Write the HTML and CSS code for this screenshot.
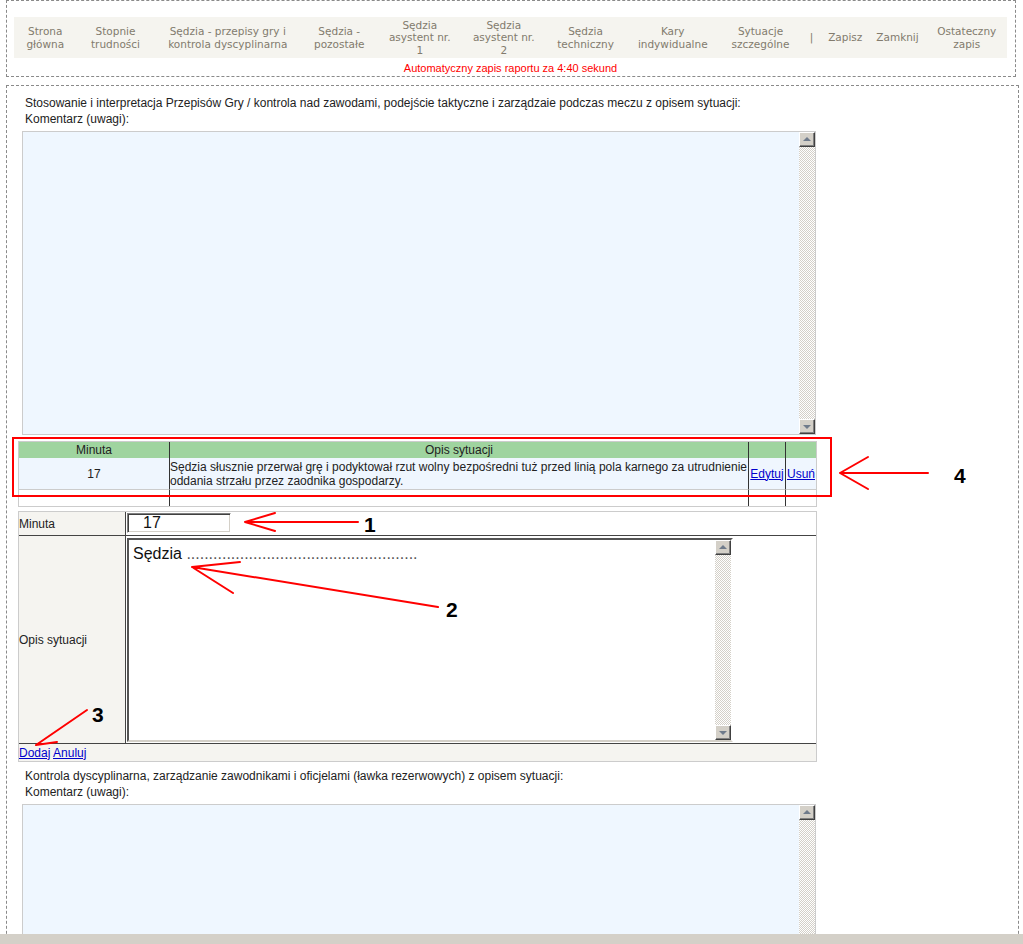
FILE: index.html
```html
<!DOCTYPE html>
<html lang="pl">
<head>
<meta charset="utf-8">
<title>Raport sędziego</title>
<link rel="stylesheet" href="styles.css">
</head>
<body>
<div class="topbox">
  <nav class="nav">
    <a class="nav-item" href="#">Strona<br>główna</a>
    <a class="nav-item" href="#">Stopnie<br>trudności</a>
    <a class="nav-item" href="#">Sędzia - przepisy gry i<br>kontrola dyscyplinarna</a>
    <a class="nav-item" href="#">Sędzia -<br>pozostałe</a>
    <a class="nav-item" href="#">Sędzia<br>asystent nr.<br>1</a>
    <a class="nav-item" href="#">Sędzia<br>asystent nr.<br>2</a>
    <a class="nav-item" href="#">Sędzia<br>techniczny</a>
    <a class="nav-item" href="#">Kary<br>indywidualne</a>
    <a class="nav-item" href="#">Sytuacje<br>szczególne</a>
    <span class="nav-item">|</span>
    <a class="nav-item" href="#">Zapisz</a>
    <a class="nav-item" href="#">Zamknij</a>
    <a class="nav-item" href="#">Ostateczny<br>zapis</a>
  </nav>
  <div class="autosave">Automatyczny zapis raportu za 4:40 sekund</div>
</div>

<div class="mainbox">
  <div class="caption">Stosowanie i interpretacja Przepisów Gry / kontrola nad zawodami, podejście taktyczne i zarządzaie podczas meczu z opisem sytuacji:</div>
  <div class="caption">Komentarz (uwagi):</div>
  <div class="memo">
    <div class="memo-body"></div>
    <div class="sb">
      <div class="sb-btn sb-up"></div>
      <div class="sb-track"></div>
      <div class="sb-btn sb-down"></div>
    </div>
  </div>

  <table class="list">
    <thead>
      <tr>
        <th class="col-min">Minuta</th>
        <th class="col-desc sep">Opis sytuacji</th>
        <th class="col-edit sep"></th>
        <th class="col-del sep"></th>
      </tr>
    </thead>
    <tbody>
      <tr class="row-data">
        <td class="num">17</td>
        <td class="sep desc"><span class="nowrap">Sędzia słusznie przerwał grę i podyktował rzut wolny bezpośredni tuż przed linią pola karnego za utrudnienie</span><br>oddania strzału przez zaodnika gospodarzy.</td>
        <td class="sep act"><a href="#">Edytuj</a></td>
        <td class="sep act"><a href="#">Usuń</a></td>
      </tr>
      <tr class="row-empty">
        <td></td>
        <td class="sep"></td>
        <td class="sep"></td>
        <td class="sep"></td>
      </tr>
    </tbody>
  </table>

  <table class="form">
    <tr class="frow-min">
      <th class="lbl">Minuta</th>
      <td class="fval"><div class="field">17</div></td>
    </tr>
    <tr class="frow-desc">
      <th class="lbl">Opis sytuacji</th>
      <td class="fval">
        <div class="ftext">
          <div class="ftext-body">Sędzia <span class="dots">....................................................</span></div>
          <div class="sb">
            <div class="sb-btn sb-up"></div>
            <div class="sb-track"></div>
            <div class="sb-btn sb-down"></div>
          </div>
        </div>
      </td>
    </tr>
    <tr class="frow-actions">
      <td colspan="2" class="actions"><a href="#">Dodaj</a> <a href="#">Anuluj</a></td>
    </tr>
  </table>

  <div class="caption spaced">Kontrola dyscyplinarna, zarządzanie zawodnikami i oficjelami (ławka rezerwowych) z opisem sytuacji:</div>
  <div class="caption">Komentarz (uwagi):</div>
  <div class="memo">
    <div class="memo-body"></div>
    <div class="sb">
      <div class="sb-btn sb-up"></div>
      <div class="sb-track"></div>
      <div class="sb-btn sb-down"></div>
    </div>
  </div>
</div>

<svg class="overlay" width="1023" height="944" viewBox="0 0 1023 944" xmlns="http://www.w3.org/2000/svg">
  <g fill="none" stroke="#ff0000" stroke-width="2" stroke-linecap="round">
    <rect x="13" y="438" width="818" height="58"/>
    <path d="M840 473 L928 473 M840 473 L868 457 M840 473 L868 489"/>
    <path d="M245 522 L358 522 M245 522 L275 513 M245 522 L275 531"/>
    <path d="M192 567 L438 607 M192 567 L240 562 M192 567 L233 593"/>
    <path d="M87 710 L36 745 M36 745 L57 742"/>
  </g>
  <g class="marks">
    <text x="954" y="483">4</text>
    <text x="364" y="532">1</text>
    <text x="446" y="617">2</text>
    <text x="92" y="722">3</text>
  </g>
</svg>
<div class="statusbar"></div>
</body>
</html>
```

FILE: styles.css
```css
html {
  overflow: hidden;
}

body {
  margin: 0;
  position: relative;
  background: #fff;
  font-family: "Liberation Sans", Arial, sans-serif;
  font-size: 12px;
  color: #222;
}

a {
  color: #0000cc;
}

/* ---------- top navigation box ---------- */
.topbox {
  margin-left: 6px;
  width: 1010px;
  box-sizing: border-box;
  border: 1px dashed #8a8a8a;
  padding: 16px 8px 0 7px;
}

.nav {
  display: grid;
  grid-template-columns: 62.5px 78px 146.5px 76.5px 84.5px 83.5px 80px 94.5px 81px 21px 46.5px 58px 80.5px;
  align-items: center;
  height: 41px;
  background: #f5f4ef;
}

.nav-item {
  text-align: center;
  white-space: nowrap;
  font-family: "DejaVu Sans", Verdana, sans-serif;
  font-size: 10.5px;
  line-height: 12.5px;
  color: #827b6d;
  text-decoration: none;
}

.autosave {
  margin-top: 3px;
  padding-bottom: 1px;
  text-align: center;
  font-size: 11px;
  line-height: 14px;
  color: #ff0000;
}

/* ---------- main content box ---------- */
.mainbox {
  margin: 8px 0 0 6px;
  width: 1013px;
  box-sizing: border-box;
  border: 1px dashed #8a8a8a;
  padding: 9px 0 0 11px;
}

.caption {
  margin-left: 7px;
  line-height: 16px;
  color: #222;
}

.caption.spaced {
  margin-top: 6px;
}

/* fake classic textarea */
.memo {
  display: flex;
  margin: 4px 0 0 4px;
  width: 794px;
  height: 304px;
  box-sizing: border-box;
  border: 1px solid #cccccc;
  background: #eff7ff;
}

.memo-body {
  flex: 1;
}

.sb {
  display: flex;
  flex-direction: column;
  width: 16px;
  flex: none;
  background: repeating-conic-gradient(#d4d0c8 0 25%, #ffffff 0 50%) 0 0 / 2px 2px;
}

.sb-track {
  flex: 1;
}

.sb-btn {
  position: relative;
  height: 15px;
  box-sizing: border-box;
  background: #d4d0c8;
  border: 1px solid;
  border-color: #ffffff #404040 #404040 #ffffff;
  box-shadow: inset -1px -1px 0 #808080;
}

.sb-btn::after {
  content: "";
  position: absolute;
  left: 3px;
  border-left: 4px solid transparent;
  border-right: 4px solid transparent;
}

.sb-up::after {
  top: 4px;
  border-bottom: 4px solid #6f7b8b;
}

.sb-down::after {
  top: 5px;
  border-top: 4px solid #6f7b8b;
}

/* ---------- list table ---------- */
.list {
  margin-top: 6px;
  width: 799px;
  table-layout: fixed;
  border-collapse: separate;
  border-spacing: 0;
  border: 1px solid #cccccc;
}

.list th,
.list td {
  box-sizing: border-box;
  padding: 0;
}

.list th {
  height: 16px;
  line-height: 16px;
  font-weight: normal;
  color: #222;
  background: #9fd49f;
  text-align: center;
}

.col-min { width: 150px; }
.col-desc { width: 579px; }
.col-edit { width: 37px; }
.col-del { width: 31px; }

.list .sep {
  border-left: 1px solid #333333;
}

.row-data td {
  height: 32px;
  background: #eff6fe;
  border-bottom: 1px solid #cccccc;
  line-height: 14px;
  vertical-align: middle;
}

.row-data .num {
  text-align: center;
}

.row-data .desc {
  padding-left: 0;
}

.row-data .act {
  text-align: center;
}

.nowrap {
  white-space: nowrap;
}

.row-empty td {
  height: 16px;
}

/* ---------- entry form ---------- */
.form {
  margin-top: 4px;
  width: 799px;
  table-layout: fixed;
  border-collapse: separate;
  border-spacing: 0;
  border: 1px solid #cccccc;
}

.form th,
.form td {
  box-sizing: border-box;
  padding: 0;
}

.lbl {
  width: 107px;
  padding-left: 1px;
  text-align: left;
  font-weight: normal;
  color: #222;
  background: #f5f4f0;
  border-right: 1px solid #444444;
  vertical-align: middle;
}

.fval {
  vertical-align: top;
}

.frow-min th,
.frow-min td {
  height: 24px;
  border-bottom: 1px solid #444444;
}

.frow-desc th,
.frow-desc td {
  height: 208px;
  border-bottom: 1px solid #444444;
}

.field {
  margin: 1px 0 0 1px;
  width: 104px;
  height: 20px;
  box-sizing: border-box;
  padding-left: 15px;
  border: 1px solid;
  border-color: #808080 #ffffff #ffffff #808080;
  box-shadow: inset 1px 1px 0 #404040, inset -1px -1px 0 #d4d0c8;
  font-size: 16px;
  line-height: 18px;
  color: #111;
}

.ftext {
  display: flex;
  margin: 2px 0 0 1px;
  width: 606px;
  height: 204px;
  box-sizing: border-box;
  border: 2px solid;
  border-color: #555555 #ffffff #d4d0c8 #555555;
  background: #fff;
}

.ftext-body {
  flex: 1;
  padding: 5px 0 0 4px;
  font-size: 16px;
  line-height: 18px;
  color: #111;
  white-space: nowrap;
  overflow: hidden;
}

.dots {
  color: #555;
}

.actions {
  height: 17px;
  padding-left: 1px;
  line-height: 16px;
  background: #f5f4f0;
}

/* ---------- annotations ---------- */
.overlay {
  position: absolute;
  top: 0;
  left: 0;
  pointer-events: none;
}

.marks text {
  font-family: "Liberation Sans", Arial, sans-serif;
  font-weight: bold;
  font-size: 21px;
  fill: #000;
}

.statusbar {
  position: fixed;
  left: 0;
  right: 0;
  bottom: 0;
  height: 10px;
  background: #d4d0c8;
}
```
